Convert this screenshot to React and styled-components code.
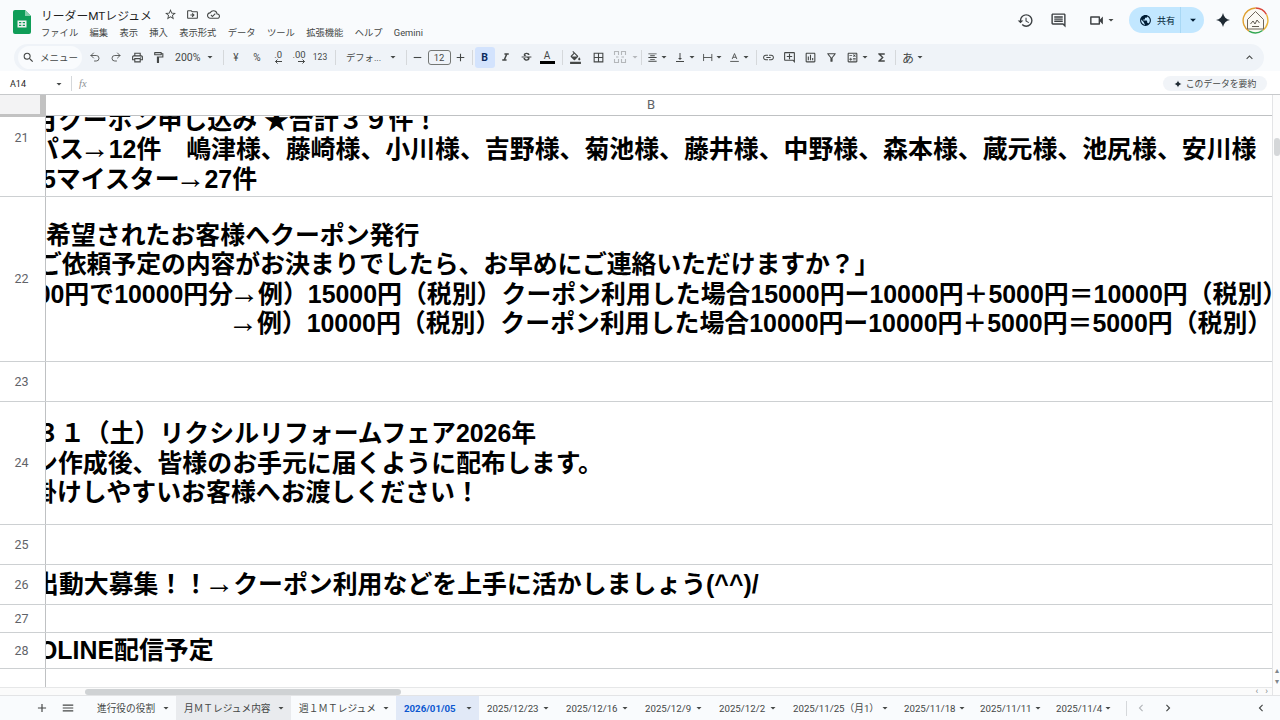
import React from "react"
import styled, { createGlobalStyle } from "styled-components"
import { Undo2, Redo2 } from "lucide-react"
import {
  MdSearch, MdOutlinePrint, MdOutlineFormatPaint, MdArrowDropDown, MdAdd, MdRemove,
  MdFormatItalic, MdStrikethroughS, MdOutlineFormatColorFill, MdBorderAll, MdFormatAlignCenter,
  MdVerticalAlignBottom, MdLink, MdOutlineAddComment, MdOutlineInsertChart, MdOutlineFilterAlt,
  MdOutlineCalculate, MdFunctions, MdExpandLess, MdHistory, MdOutlineComment, MdOutlineVideocam,
  MdPublic, MdStarBorder, MdOutlineDriveFileMove, MdOutlineCloudDone, MdMenu, MdChevronLeft, MdChevronRight,
} from "react-icons/md"

const uiFont = `Roboto, "Noto Sans CJK JP", sans-serif`
const lineColor = "#cdd0d2"
const chromeBg = "#f9fbfd"

const GlobalStyle = createGlobalStyle`
  html, body { margin: 0; padding: 0; background: #fff; }
`

const Page = styled.div`
  width: 1280px;
  height: 720px;
  overflow: hidden;
  display: flex;
  flex-direction: column;
  font-family: ${uiFont};
  color: #444746;
`

const TopBar = styled.div`
  height: 44px;
  flex: none;
  display: flex;
  background: ${chromeBg};
  padding-left: 13px;
  box-sizing: border-box;
`

const DocInfo = styled.div`
  display: flex;
  flex-direction: column;
  margin-left: 10px;
  padding-top: 6px;
`

const TitleRow = styled.div`
  display: flex;
  align-items: center;
  height: 17px;
`

const Title = styled.div`
  font-size: 11.8px;
  color: #1f1f1f;
  width: 119px;
  white-space: nowrap;
`

const TitleIcon = styled.span`
  display: flex;
  width: 21.5px;
  justify-content: center;
  font-size: 13px;
  color: #444746;
`

const MenuRow = styled.div`
  display: flex;
  gap: 11.3px;
  margin-top: 3px;
  font-size: 9.3px;
  line-height: 14px;
  color: #444746;
`

const RightTools = styled.div`
  margin-left: auto;
  display: flex;
  align-items: center;
  padding: 0 11px 4px 0;
  font-size: 17px;
`

const RoundIcon = styled.span`
  display: flex;
  align-items: center;
  justify-content: center;
  width: ${(p) => p.$w || 33}px;
  margin-right: ${(p) => p.$mr || 0}px;
  color: #3c4043;
`

const ShareButton = styled.div`
  display: flex;
  align-items: center;
  width: 75px;
  height: 26px;
  border-radius: 13px;
  background: #c2e7ff;
  color: #001d35;
  margin: 0 4px 0 10px;
`

const ShareMain = styled.div`
  width: 52px;
  height: 100%;
  display: flex;
  align-items: center;
  gap: 5px;
  padding-left: 10px;
  box-sizing: border-box;
  border-right: 1px solid #a8d8f5;
  font-size: 13px;
  span { font-size: 9px; }
`

const ShareCaret = styled.div`
  flex: 1;
  display: flex;
  justify-content: center;
  font-size: 14px;
`

const ToolbarBand = styled.div`
  background: ${chromeBg};
  flex: none;
`

const Toolbar = styled.div`
  height: 27px;
  margin: 0 16px 0 14px;
  background: #eff3f8;
  border-radius: 14px;
  display: flex;
  align-items: center;
  padding: 0 4px 1px;
  box-sizing: border-box;
  color: #444746;
`

const SearchPill = styled.div`
  width: 64px;
  height: 23px;
  background: #f9fbfd;
  border-radius: 12px;
  display: flex;
  align-items: center;
  gap: 5px;
  padding-left: 4px;
  box-sizing: border-box;
  font-size: 9.5px;
  white-space: nowrap;
  margin-right: 2.5px;
  svg { font-size: 13px; flex: none; }
`

const Tool = styled.div`
  flex: none;
  width: ${(p) => p.$w || 21}px;
  height: 21px;
  display: flex;
  align-items: center;
  justify-content: center;
  gap: ${(p) => p.$gap || 0}px;
  font-size: ${(p) => p.$size || 13}px;
  border-radius: 3px;
  white-space: nowrap;
  background: ${(p) => (p.$active ? "#d3e3fd" : "transparent")};
  color: ${(p) => (p.$active ? "#0b2a5c" : "#444746")};
  font-weight: ${(p) => (p.$bold ? 700 : 400)};
`

const CaretTool = styled(Tool)`
  justify-content: flex-start;
  padding-left: ${(p) => p.$pl ?? 4}px;
  box-sizing: border-box;
`

const PushedTool = styled(Tool)`
  margin-left: auto;
`

const Caret = styled(MdArrowDropDown)`
  flex: none;
  font-size: 12px;
  color: ${(p) => (p.$muted ? "#b4b7ba" : "#444746")};
`

const Sep = styled.div`
  flex: none;
  width: 1px;
  height: 15px;
  background: #d5d8db;
  margin: 0 ${(p) => p.$right ?? 2}px 0 ${(p) => p.$left ?? 2}px;
`

const SizeBox = styled.div`
  flex: none;
  width: 23px;
  height: 15px;
  border: 1px solid #747775;
  border-radius: 3px;
  box-sizing: border-box;
  display: flex;
  align-items: center;
  justify-content: center;
  font-size: 9.5px;
`

const ColorA = styled.div`
  width: 15px;
  display: flex;
  flex-direction: column;
  align-items: center;
  font-size: 10px;
  line-height: 11px;
  &::after {
    content: "";
    width: 15px;
    height: 2.5px;
    background: #000;
  }
`

const DecimalWrap = styled.div`
  display: flex;
  flex-direction: column;
  align-items: flex-end;
  font-size: 9.5px;
  line-height: 9px;
`

const FormulaBar = styled.div`
  height: 24px;
  flex: none;
  display: flex;
  align-items: center;
  padding: 2px 13px 0 10px;
  box-sizing: border-box;
  border-bottom: 1px solid #c7c9cb;
  font-size: 9px;
  color: #444746;
`

const CellRef = styled.div`
  width: 55px;
  display: flex;
  justify-content: space-between;
  align-items: center;
  color: #1f1f1f;
`

const Fx = styled.div`
  font-family: "Liberation Serif", serif;
  font-style: italic;
  font-size: 10.5px;
  color: #8e9295;
  margin-left: 7px;
`

const SummaryPill = styled.div`
  margin-left: auto;
  width: 104px;
  height: 15px;
  border-radius: 8px;
  background: #f1f4f8;
  display: flex;
  align-items: center;
  justify-content: center;
  gap: 4px;
  font-size: 8.8px;
  white-space: nowrap;
`

const SheetArea = styled.div`
  flex: 1;
  min-height: 0;
  display: flex;
`

const Grid = styled.div`
  flex: 1;
  min-width: 0;
  display: flex;
  flex-direction: column;
`

const Row = styled.div`
  flex: none;
  height: ${(p) => p.$h}px;
  display: flex;
  box-sizing: border-box;
  border-bottom: 1.5px solid ${lineColor};
`

const RowHead = styled.div`
  flex: none;
  width: 46px;
  box-sizing: border-box;
  border-right: 1.5px solid #bfc1c3;
  display: flex;
  align-items: center;
  justify-content: center;
  font-size: 12.5px;
  color: #5f6368;
  padding: 0 2px ${(p) => p.$lift || 1}px 0;
`

const Cell = styled.div`
  flex: 1;
  min-width: 0;
  overflow: hidden;
  display: flex;
  flex-direction: column;
  justify-content: ${(p) => (p.$bottom ? "flex-end" : "center")};
  padding: 1px 0 ${(p) => (p.$bottom ? 2 : 0)}px;
`

const Line = styled.div`
  flex: none;
  margin-left: ${(p) => p.$indent || 0}px;
  letter-spacing: ${(p) => p.$track || 0}px;
  font-family: "Liberation Sans", "Noto Sans CJK JP", sans-serif;
  font-weight: 700;
  font-size: 24.9px;
  line-height: 29.5px;
  color: #000;
  white-space: nowrap;
`

const Arrow = styled.span`
  font-family: "Liberation Serif", serif;
  font-weight: 400;
  font-size: 30px;
  line-height: 0;
  margin: 0 -1.100px 0 -4px;
`

const ColumnHeader = styled.div`
  flex: none;
  height: 21px;
  display: flex;
  box-sizing: border-box;
  border-bottom: 1.5px solid #bfc1c3;
`

const Corner = styled.div`
  flex: none;
  width: 46px;
  box-sizing: border-box;
  background: #f3f3f4;
  border-right: 6px solid #c2c2c2;
  border-bottom: 3px solid #c2c2c2;
  margin-bottom: -1.5px;
`

const ColumnName = styled.div`
  flex: 1;
  display: flex;
  align-items: center;
  justify-content: center;
  padding: 0 16px 2px 0;
  font-size: 13px;
  color: #5f6368;
`

const Filler = styled.div`
  flex: 1;
  display: flex;
`

const HScroll = styled.div`
  flex: none;
  height: 8px;
  display: flex;
  align-items: center;
  background: #fbfbfb;
  border-top: 1px solid #e6e7e8;
  box-sizing: border-box;
  padding-left: 85px;
`

const HThumb = styled.div`
  width: 316px;
  height: 6px;
  border-radius: 3px;
  background: #cfd2d4;
`

const ScrollArrows = styled.div`
  margin-left: auto;
  display: flex;
  gap: 7px;
  font-size: 9px;
  line-height: 7px;
  color: #80868b;
  padding-right: 4px;
`

const VScroll = styled.div`
  flex: none;
  width: 8px;
  display: flex;
  flex-direction: column;
  align-items: center;
  box-sizing: border-box;
  border-left: 1px solid #e3e4e6;
  background: #fcfcfc;
  padding-top: 43px;
`

const VThumb = styled.div`
  width: 6px;
  height: 18px;
  border-radius: 3px;
  background: #d5d7d9;
`

const VArrows = styled.div`
  margin-top: auto;
  margin-bottom: 8px;
  display: flex;
  flex-direction: column;
  align-items: center;
  font-size: 8px;
  line-height: 11px;
  color: #80868b;
`

const TabBar = styled.div`
  flex: none;
  height: 25px;
  display: flex;
  align-items: center;
  background: ${chromeBg};
  border-top: 1px solid #e3e4e6;
  box-sizing: border-box;
  padding: 0 9px 0 30px;
  font-size: 9.7px;
`

const TabIcon = styled.div`
  flex: none;
  width: ${(p) => p.$w}px;
  margin-right: ${(p) => p.$mr || 0}px;
  margin-left: ${(p) => (p.$end ? "auto" : "0")};
  display: flex;
  justify-content: center;
  font-size: 14px;
  color: ${(p) => (p.$muted ? "#b4b7ba" : "#444746")};
`

const Tab = styled.div`
  flex: none;
  width: ${(p) => p.$w}px;
  height: 100%;
  box-sizing: border-box;
  display: flex;
  align-items: center;
  justify-content: space-between;
  padding: 0 4px 0 ${(p) => p.$pl || 8}px;
  white-space: nowrap;
  background: ${(p) => (p.$active ? "#e1e9f7" : p.$hover ? "#e9ebee" : "transparent")};
  color: ${(p) => (p.$active ? "#0b57d0" : "#444746")};
  font-weight: ${(p) => (p.$active ? 700 : 400)};
`

const rows = [
  { n: 21, h: 81, bottom: true, lift: 38, lines: [
    { indent: -13, text: "月クーポン申し込み ★合計３９件！" },
    { indent: -12, text: "パス→12件　嶋津様、藤崎様、小川様、吉野様、菊池様、藤井様、中野様、森本様、蔵元様、池尻様、安川様" },
    { indent: -4, text: "5マイスター→27件" },
  ] },
  { n: 22, h: 165, lines: [
    { indent: 0, text: "希望されたお客様へクーポン発行" },
    { indent: -9, track: -0.1, text: "ご依頼予定の内容がお決まりでしたら、お早めにご連絡いただけますか？」" },
    { indent: -37, text: "5000円で10000円分→例）15000円（税別）クーポン利用した場合15000円ー10000円＋5000円＝10000円（税別）" },
    { indent: 186, text: "→例）10000円（税別）クーポン利用した場合10000円ー10000円＋5000円＝5000円（税別）" },
  ] },
  { n: 23, h: 40, lines: [] },
  { n: 24, h: 123, lines: [
    { indent: -11, text: "３１（土）リクシルリフォームフェア2026年" },
    { indent: -13, text: "ン作成後、皆様のお手元に届くように配布します。" },
    { indent: -14, text: "掛けしやすいお客様へお渡しください！" },
  ] },
  { n: 25, h: 40, lines: [] },
  { n: 26, h: 40, lines: [{ indent: -12, text: "出動大募集！！→クーポン利用などを上手に活かしましょう(^^)/" }] },
  { n: 27, h: 28, lines: [] },
  { n: 28, h: 36, lines: [{ indent: -8, text: "OLINE配信予定" }] },
]

const tabs = [
  { label: "進行役の役割", w: 87 },
  { label: "月ＭＴレジュメ内容", w: 115, hover: true },
  { label: "週１ＭＴレジュメ", w: 105 },
  { label: "2026/01/05", w: 83, active: true },
  { label: "2025/12/23", w: 77 },
  { label: "2025/12/16", w: 79, pl: 10 },
  { label: "2025/12/9", w: 74, pl: 10 },
  { label: "2025/12/2", w: 74, pl: 10 },
  { label: "2025/11/25（月1）", w: 111, pl: 10 },
  { label: "2025/11/18", w: 77, pl: 10 },
  { label: "2025/11/11", w: 75, pl: 9 },
  { label: "2025/11/4", w: 72, pl: 10 },
]

const menus = ["ファイル", "編集", "表示", "挿入", "表示形式", "データ", "ツール", "拡張機能", "ヘルプ", "Gemini"]

const withArrows = (text) =>
  text.split("→").flatMap((part, i) => (i === 0 ? [part] : [<Arrow key={i}>→</Arrow>, part]))

const SheetsLogo = () => (
  <svg width="18" height="24" viewBox="0 0 18 24" style={{ marginTop: 10 }}>
    <path d="M2 0h10l6 6v16a2 2 0 0 1-2 2H2a2 2 0 0 1-2-2V2a2 2 0 0 1 2-2z" fill="#0f9d58" />
    <path d="M12 0l6 6h-6z" fill="#87ceac" />
    <path d="M4.500 10.500h9v7h-9z M6 12v1.300h2.300V12z M9.700 12v1.300H12V12z M6 14.700V16h2.300v-1.300z M9.700 14.700V16H12v-1.300z" fill="#f1f1f1" fillRule="evenodd" />
  </svg>
)

const Sparkle = ({ size = 16, color = "#1f2a33" }) => (
  <svg width={size} height={size} viewBox="0 0 16 16">
    <path d="M8 1c.7 3.800 3.200 6.300 7 7-3.800.7-6.300 3.200-7 7-.7-3.800-3.200-6.300-7-7 3.800-.7 6.300-3.200 7-7z" fill={color} />
  </svg>
)

const Avatar = () => (
  <svg width="27" height="27" viewBox="0 0 27 27">
    <circle cx="13.500" cy="13.500" r="11.500" fill="#fbf9f4" />
    <path d="M13.500 1a12.500 12.500 0 0 1 11 6.500" fill="none" stroke="#d9453a" strokeWidth="1.400" />
    <path d="M24.500 7.500a12.500 12.500 0 0 1-4 16" fill="none" stroke="#e9b43a" strokeWidth="1.400" />
    <path d="M20.500 23.500a12.500 12.500 0 0 1-13.500.6" fill="none" stroke="#34a853" strokeWidth="1.400" />
    <path d="M7 24.100A12.500 12.500 0 0 1 13.500 1" fill="none" stroke="#e0a030" strokeWidth="1.400" />
    <path d="M5.500 12.500l8-8 8 8v9.500h-16z" fill="none" stroke="#6f665a" strokeWidth="1" />
    <path d="M8.500 17l2.500-3 2 3 2-4 2.500 3M10 19.500h7" fill="none" stroke="#4f483f" strokeWidth=".9" />
  </svg>
)

const MergeIcon = () => (
  <svg width="14" height="14" viewBox="0 0 14 14" fill="none" stroke="#b4b7ba" strokeWidth="1.100">
    <path d="M1.500 5V1.500H5.500V5M8.500 5V1.500h4V5M1.500 9v3.500h4V9M8.500 9v3.500h4V9M3 7h2.500M8.500 7H11" />
  </svg>
)

const WrapIcon = () => (
  <svg width="13" height="13" viewBox="0 0 14 14" fill="none" stroke="#444746" strokeWidth="1.100">
    <path d="M2 2.500v9M12.500 2.500v9M2 7h10.500" />
  </svg>
)

const RotateIcon = () => (
  <svg width="13" height="13" viewBox="0 0 14 14" fill="none" stroke="#444746" strokeWidth="1.100">
    <path d="M4 9l3-7 3 7M5 6.700h4M1.500 12h11" />
  </svg>
)

const DecimalIcon = ({ label, dir }) => (
  <DecimalWrap>
    {label}
    <svg width="8" height="5" viewBox="0 0 8 5" fill="none" stroke="#444746" strokeWidth="1">
      <path d={dir === "left" ? "M8 2.500H1.500M3.500.5l-2 2 2 2" : "M0 2.500h6.500M4.500.5l2 2-2 2"} />
    </svg>
  </DecimalWrap>
)

function App() {
  return (
    <Page>
      <GlobalStyle />
      <TopBar>
        <SheetsLogo />
        <DocInfo>
          <TitleRow>
            <Title>リーダーMTレジュメ</Title>
            <TitleIcon><MdStarBorder /></TitleIcon>
            <TitleIcon><MdOutlineDriveFileMove /></TitleIcon>
            <TitleIcon><MdOutlineCloudDone /></TitleIcon>
          </TitleRow>
          <MenuRow>
            {menus.map((m) => <span key={m}>{m}</span>)}
          </MenuRow>
        </DocInfo>
        <RightTools>
          <RoundIcon><MdHistory /></RoundIcon>
          <RoundIcon $mr={10.5}><MdOutlineComment /></RoundIcon>
          <RoundIcon $w={34}>
            <MdOutlineVideocam />
            <Caret />
          </RoundIcon>
          <ShareButton>
            <ShareMain><MdPublic /><span>共有</span></ShareMain>
            <ShareCaret><MdArrowDropDown /></ShareCaret>
          </ShareButton>
          <RoundIcon $w={30} $mr={4}><Sparkle /></RoundIcon>
          <Avatar />
        </RightTools>
      </TopBar>

      <ToolbarBand>
        <Toolbar>
          <SearchPill><MdSearch />メニュー</SearchPill>
          <Tool><Undo2 size={12} strokeWidth={1.7} /></Tool>
          <Tool><Redo2 size={12} strokeWidth={1.7} /></Tool>
          <Tool><MdOutlinePrint /></Tool>
          <Tool><MdOutlineFormatPaint /></Tool>
          <CaretTool $w={49} $pl={6.5} $size={10.5} $gap={4}>200%<Caret /></CaretTool>
          <Sep $left={5} $right={2} />
          <Tool $size={10}>¥</Tool>
          <Tool $size={10}>%</Tool>
          <Tool><DecimalIcon label=".0" dir="left" /></Tool>
          <Tool><DecimalIcon label=".00" dir="right" /></Tool>
          <Tool $size={8.5}>123</Tool>
          <Sep $left={4} $right={4} />
          <CaretTool $w={61} $pl={6.5} $size={9.3} $gap={6}>デフォ...<Caret /></CaretTool>
          <Sep $left={5} $right={1} />
          <Tool $w={20}><MdRemove /></Tool>
          <SizeBox>12</SizeBox>
          <Tool $w={20}><MdAdd /></Tool>
          <Sep $left={1} $right={2} />
          <Tool $w={20} $active $bold $size={10.5}>B</Tool>
          <Tool><MdFormatItalic /></Tool>
          <Tool><MdStrikethroughS /></Tool>
          <Tool><ColorA>A</ColorA></Tool>
          <Sep $left={4} $right={2} />
          <Tool><MdOutlineFormatColorFill /></Tool>
          <Tool $w={25}><MdBorderAll /></Tool>
          <Tool $w={18}><MergeIcon /></Tool>
          <Tool $w={12}><Caret $muted /></Tool>
          <Sep $left={0} $right={1} />
          <CaretTool $w={27}><MdFormatAlignCenter /><Caret /></CaretTool>
          <CaretTool $w={28}><MdVerticalAlignBottom /><Caret /></CaretTool>
          <CaretTool $w={27}><WrapIcon /><Caret /></CaretTool>
          <CaretTool $w={27}><RotateIcon /><Caret /></CaretTool>
          <Sep $left={4} $right={1} />
          <Tool><MdLink /></Tool>
          <Tool><MdOutlineAddComment /></Tool>
          <Tool><MdOutlineInsertChart /></Tool>
          <Tool><MdOutlineFilterAlt /></Tool>
          <CaretTool $w={29.5}><MdOutlineCalculate /><Caret /></CaretTool>
          <Tool $w={20}><MdFunctions /></Tool>
          <Sep $left={4} $right={1} />
          <CaretTool $w={30} $pl={5} $size={12}>あ<Caret /></CaretTool>
          <PushedTool><MdExpandLess /></PushedTool>
        </Toolbar>
      </ToolbarBand>

      <FormulaBar>
        <CellRef>A14<Caret /></CellRef>
        <Sep $left={6} $right={0} />
        <Fx>fx</Fx>
        <SummaryPill><Sparkle size={8} />このデータを要約</SummaryPill>
      </FormulaBar>

      <SheetArea>
        <Grid>
          <ColumnHeader>
            <Corner />
            <ColumnName>B</ColumnName>
          </ColumnHeader>
          {rows.map((r) => (
            <Row key={r.n} $h={r.h}>
              <RowHead $lift={r.lift}>{r.n}</RowHead>
              <Cell $bottom={r.bottom}>
                {r.lines.map((l) => (
                  <Line key={l.text} $indent={l.indent} $track={l.track}>{withArrows(l.text)}</Line>
                ))}
              </Cell>
            </Row>
          ))}
          <Filler><RowHead /></Filler>
          <HScroll>
            <HThumb />
            <ScrollArrows><span>‹</span><span>›</span></ScrollArrows>
          </HScroll>
        </Grid>
        <VScroll>
          <VThumb />
          <VArrows><span>▴</span><span>▾</span></VArrows>
        </VScroll>
      </SheetArea>

      <TabBar>
        <TabIcon $w={23}><MdAdd /></TabIcon>
        <TabIcon $w={29} $mr={7}><MdMenu /></TabIcon>
        {tabs.map((t) => (
          <Tab key={t.label} $w={t.w} $pl={t.pl} $active={t.active} $hover={t.hover}>
            {t.label}
            <Caret />
          </Tab>
        ))}
        <Sep $left={8} $right={0} />
        <TabIcon $w={27} $muted><MdChevronLeft /></TabIcon>
        <TabIcon $w={27}><MdChevronRight /></TabIcon>
        <TabIcon $w={20} $end><MdChevronLeft /></TabIcon>
      </TabBar>
    </Page>
  )
}

export default App
